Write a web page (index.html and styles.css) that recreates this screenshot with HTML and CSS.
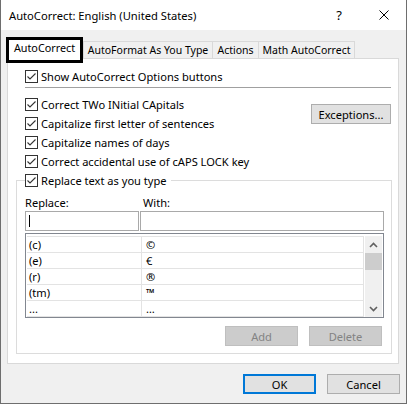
FILE: index.html
```html
<!DOCTYPE html>
<html>
<head>
<meta charset="utf-8">
<link rel="stylesheet" href="styles.css">
</head>
<body>
<div class="window">
  <div class="titlebar">
    <span class="title">AutoCorrect: English (United States)</span>
    <span class="help">?</span>
    <span class="close"><svg width="10" height="10" viewBox="0 0 10 10"><path d="M0.5 0.5L9.5 9.5M9.5 0.5L0.5 9.5" stroke="#000" stroke-width="1" fill="none"/></svg></span>
  </div>
  <div class="body">
    <div class="tabs">
      <div class="tab selected">AutoCorrect</div>
      <div class="tab first autoformat">AutoFormat As You Type</div>
      <div class="tab actions-tab">Actions</div>
      <div class="tab math">Math AutoCorrect</div>
    </div>
    <div class="panel">
      <div class="check show"><span class="box"><svg width="11" height="11" viewBox="0 0 11 11"><path d="M1.5 5.5L4 8L9.5 2.5" stroke="#333" stroke-width="1.1" fill="none"/></svg></span><span>Show AutoCorrect Options buttons</span></div>
      <div class="sep"></div>
      <div class="options">
        <div class="checks">
          <div class="check"><span class="box"><svg width="11" height="11" viewBox="0 0 11 11"><path d="M1.5 5.5L4 8L9.5 2.5" stroke="#333" stroke-width="1.1" fill="none"/></svg></span><span>Correct TWo INitial CApitals</span></div>
          <div class="check"><span class="box"><svg width="11" height="11" viewBox="0 0 11 11"><path d="M1.5 5.5L4 8L9.5 2.5" stroke="#333" stroke-width="1.1" fill="none"/></svg></span><span>Capitalize first letter of sentences</span></div>
          <div class="check"><span class="box"><svg width="11" height="11" viewBox="0 0 11 11"><path d="M1.5 5.5L4 8L9.5 2.5" stroke="#333" stroke-width="1.1" fill="none"/></svg></span><span>Capitalize names of days</span></div>
          <div class="check"><span class="box"><svg width="11" height="11" viewBox="0 0 11 11"><path d="M1.5 5.5L4 8L9.5 2.5" stroke="#333" stroke-width="1.1" fill="none"/></svg></span><span>Correct accidental use of cAPS LOCK key</span></div>
        </div>
        <div class="btn exceptions">Exceptions...</div>
      </div>
      <fieldset class="group">
        <legend class="check"><span class="box"><svg width="11" height="11" viewBox="0 0 11 11"><path d="M1.5 5.5L4 8L9.5 2.5" stroke="#333" stroke-width="1.1" fill="none"/></svg></span><span>Replace text as you type</span></legend>
        <div class="labels"><span class="lbl-replace">Replace:</span><span>With:</span></div>
        <div class="inputs">
          <div class="input replace"><span class="caret"></span></div>
          <div class="input with"></div>
        </div>
        <div class="listbox">
          <div class="rows">
            <div class="row"><div class="cell c1">(c)</div><div class="cell c2">©</div></div>
            <div class="row"><div class="cell c1">(e)</div><div class="cell c2">€</div></div>
            <div class="row"><div class="cell c1">(r)</div><div class="cell c2">®</div></div>
            <div class="row"><div class="cell c1">(tm)</div><div class="cell c2">™</div></div>
            <div class="row"><div class="cell c1">...</div><div class="cell c2">…</div></div>
          </div>
          <div class="scrollbar">
            <div class="sb-btn"><svg width="9" height="6" viewBox="0 0 9 6"><path d="M1 5L4.5 1.5L8 5" stroke="#606060" stroke-width="1.6" fill="none"/></svg></div>
            <div class="thumb"></div>
            <div class="sb-track"></div>
            <div class="sb-btn"><svg width="9" height="6" viewBox="0 0 9 6"><path d="M1 1L4.5 4.5L8 1" stroke="#606060" stroke-width="1.6" fill="none"/></svg></div>
          </div>
        </div>
        <div class="actions">
          <div class="btn disabled">Add</div>
          <div class="btn disabled">Delete</div>
        </div>
      </fieldset>
    </div>
    <div class="footer">
      <div class="btn ok">OK</div>
      <div class="btn">Cancel</div>
    </div>
  </div>
</div>
</body>
</html>
```

FILE: styles.css
```css
html, body {
  margin: 0;
  padding: 0;
  background: #ffffff;
}

body {
  font-family: "Noto Sans", "Open Sans", sans-serif;
  font-size: 11.1px;
  color: #000;
}

.window {
  width: 407px;
  height: 404px;
  box-sizing: border-box;
  border: 1px solid #6e6e6e;
  border-top: none;
  background: #f0f0f0;
  display: flex;
  flex-direction: column;
}

.titlebar {
  height: 30px;
  flex: none;
  background: #ffffff;
  display: flex;
  align-items: center;
  padding-left: 8px;
}

.title {
  font-size: 11.2px;
}

.help {
  margin-left: auto;
  width: 44px;
  text-align: center;
  font-size: 13px;
}

.close {
  width: 45px;
  display: flex;
  justify-content: center;
  align-items: center;
}

.body {
  flex: 1;
  display: flex;
  flex-direction: column;
  padding: 7px 7px 0 6px;
}

.tabs {
  display: flex;
  align-items: flex-end;
  height: 21px;
}

.tab {
  height: 17px;
  box-sizing: border-box;
  border: 1px solid #d9d9d9;
  border-bottom: none;
  border-left: none;
  padding: 0;
  line-height: 16px;
  background: #f0f0f0;
  white-space: nowrap;
  text-align: center;
  font-size: 10.5px;
}

.tab.first {
  border-left: 1px solid #d9d9d9;
}

.tab.autoformat {
  width: 130px;
}

.tab.actions-tab {
  width: 46px;
}

.tab.math {
  width: 96px;
}

.tab.selected {
  position: relative;
  z-index: 1;
  width: 77px;
  height: 26px;
  margin-left: -1px;
  margin-bottom: -5px;
  border: 3px solid #000;
  background: #ffffff;
  font-size: 10.8px;
}

.panel {
  height: 306px;
  box-sizing: border-box;
  background: #ffffff;
  border: 1px solid #d9d9d9;
  padding-top: 8px;
}

.check {
  display: flex;
  align-items: center;
  height: 19px;
  white-space: nowrap;
}

.check.show {
  height: 18px;
  padding-left: 17px;
}

.box {
  width: 13px;
  height: 13px;
  box-sizing: border-box;
  border: 1px solid #333333;
  background: #fff;
  margin-right: 3px;
  display: flex;
  flex: none;
}

.sep {
  height: 1px;
  background: #a0a0a0;
  margin: 2px 7px 0 17px;
}

.options {
  display: flex;
  margin: 7px 7px 0 17px;
}

.checks {
  flex: 1;
}

.btn {
  width: 73px;
  height: 20px;
  box-sizing: border-box;
  border: 1px solid #adadad;
  background: #e1e1e1;
  display: flex;
  align-items: center;
  justify-content: center;
}

.exceptions {
  width: 80px;
  margin-top: 9px;
}

.group {
  margin: 0 6px 0 8px;
  padding: 0 7px 7px 8px;
  border: 1px solid #dcdcdc;
  min-width: 0;
}

.group legend {
  padding: 0 4px 0 0;
}

.labels {
  display: flex;
  margin-top: 5px;
  height: 16px;
  line-height: 16px;
}

.lbl-replace {
  width: 118px;
}

.inputs {
  display: flex;
  gap: 1px;
}

.input {
  height: 20px;
  box-sizing: border-box;
  border: 1px solid #a9a9a9;
  background: #fff;
}

.input.replace {
  width: 114px;
  display: flex;
  align-items: center;
}

.input.with {
  flex: 1;
}

.caret {
  width: 1px;
  height: 12px;
  margin-left: 3px;
  background: #000;
}

.listbox {
  margin-top: 2px;
  border: 1px solid #828790;
  padding: 2px 1px 0 1px;
  display: flex;
  background: #fff;
}

.rows {
  flex: 1;
  margin-right: 1px;
}

.row {
  display: flex;
  height: 16px;
  box-sizing: border-box;
  border-top: 1px solid #e3e3e3;
  line-height: 15px;
}

.row:last-child {
  height: 17px;
  border-bottom: 1px solid #e3e3e3;
}

.cell {
  box-sizing: border-box;
  border-right: 1px solid #e3e3e3;
}

.c1 {
  width: 115px;
  padding-left: 2px;
}

.c2 {
  flex: 1;
  padding-left: 4px;
}

.scrollbar {
  width: 17px;
  background: #f0f0f0;
  display: flex;
  flex-direction: column;
}

.sb-btn {
  height: 17px;
  display: flex;
  align-items: center;
  justify-content: center;
}

.thumb {
  height: 17px;
  background: #cdcdcd;
}

.sb-track {
  flex: 1;
}

.actions {
  display: flex;
  justify-content: flex-end;
  gap: 11px;
  margin-top: 8px;
  margin-right: 2px;
}

.btn.disabled {
  background: #cccccc;
  border-color: #bfbfbf;
  color: #838383;
}

.footer {
  display: flex;
  justify-content: flex-end;
  gap: 11px;
  padding-top: 10px;
  margin-right: -1px;
}

.btn.ok {
  border: 2px solid #0078d7;
}
```
